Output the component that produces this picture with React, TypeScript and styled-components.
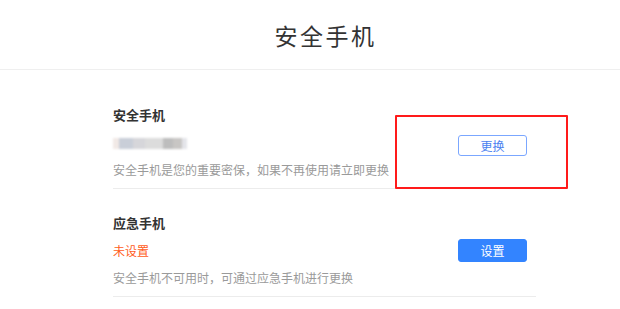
import React from "react";
import styled, { createGlobalStyle } from "styled-components";

const GlobalStyle = createGlobalStyle`
  html, body {
    margin: 0;
    padding: 0;
    background: #fff;
  }
  body {
    font-family: "Noto Sans CJK SC", "Noto Sans", sans-serif;
    color: #333;
  }
`;

const Page = styled.div`
  width: 620px;
  height: 309px;
  overflow: hidden;
`;

const Header = styled.header`
  height: 70px;
  border-bottom: 1px solid #efefef;
  display: flex;
  align-items: center;
  justify-content: center;
  padding-left: 31px;
  box-sizing: border-box;

  h1 {
    margin: 0;
    font-size: 23px;
    font-weight: 400;
    color: #333;
    letter-spacing: 2.5px;
  }
`;

const Content = styled.div`
  width: 423px;
  margin-left: 113px;
`;

const Section = styled.section<{ $top: number }>`
  position: relative;
  display: flex;
  align-items: flex-start;
  padding-top: ${(p) => p.$top}px;
  padding-bottom: 8px;
  border-bottom: 1px solid #ececec;
`;

const Info = styled.div`
  flex: 1;
  display: flex;
  flex-direction: column;
`;

const Title = styled.div`
  height: 20px;
  line-height: 20px;
  font-size: 13px;
  font-weight: 700;
  color: #333;
  margin-bottom: 8px;
`;

const Status = styled.div`
  height: 20px;
  line-height: 20px;
  font-size: 12px;
  color: #ff5c22;
  margin-bottom: 7px;
`;

const Desc = styled.div`
  height: 20px;
  line-height: 20px;
  font-size: 12px;
  color: #9a9a9a;
`;

const Masked = styled.div`
  height: 20px;
  display: flex;
  align-items: center;
  margin-bottom: 7px;
`;

const Blur = styled.div`
  display: flex;
  height: 11px;
  filter: blur(1.2px);
`;

const Chip = styled.span<{ $w: number; $c: string }>`
  width: ${(p) => p.$w}px;
  background: ${(p) => p.$c};
`;

const Actions = styled.div<{ $offset: number }>`
  padding-top: ${(p) => p.$offset}px;
  padding-right: 9px;
`;

const Button = styled.button<{ $primary?: boolean }>`
  width: 69px;
  height: ${(p) => (p.$primary ? 23 : 21)}px;
  border-radius: 3px;
  font-family: "Noto Sans CJK SC", sans-serif;
  font-size: 12px;
  padding: 0;
  cursor: pointer;
  border: 1px solid ${(p) => (p.$primary ? "#3384ff" : "#7ba7ff")};
  background: ${(p) => (p.$primary ? "#3384ff" : "#fff")};
  color: ${(p) => (p.$primary ? "#fff" : "#4c82f0")};
`;

const Highlight = styled.div`
  position: absolute;
  left: 282px;
  top: 45px;
  width: 169px;
  height: 70px;
  border: 2px solid #ff1a1a;
  border-radius: 1px;
  pointer-events: none;
`;

const chips = [
  { w: 6, c: "#f1e9e6" },
  { w: 14, c: "#c9ced8" },
  { w: 12, c: "#d6d6da" },
  { w: 18, c: "#dcdcdc" },
  { w: 10, c: "#bdbdbd" },
  { w: 9, c: "#c8c6c4" },
  { w: 5, c: "#e4e5ea" },
];

export default function App() {
  return (
    <Page>
      <GlobalStyle />
      <Header>
        <h1>安全手机</h1>
      </Header>
      <Content>
        <Section $top={35}>
          <Info>
            <Title>安全手机</Title>
            <Masked>
              <Blur>
                {chips.map((c, i) => (
                  <Chip key={i} $w={c.w} $c={c.c} />
                ))}
              </Blur>
            </Masked>
            <Desc>安全手机是您的重要密保，如果不再使用请立即更换</Desc>
          </Info>
          <Actions $offset={27}>
            <Button>更换</Button>
          </Actions>
          <Highlight />
        </Section>
        <Section $top={24}>
          <Info>
            <Title>应急手机</Title>
            <Status>未设置</Status>
            <Desc>安全手机不可用时，可通过应急手机进行更换</Desc>
          </Info>
          <Actions $offset={24}>
            <Button $primary>设置</Button>
          </Actions>
        </Section>
      </Content>
    </Page>
  );
}
